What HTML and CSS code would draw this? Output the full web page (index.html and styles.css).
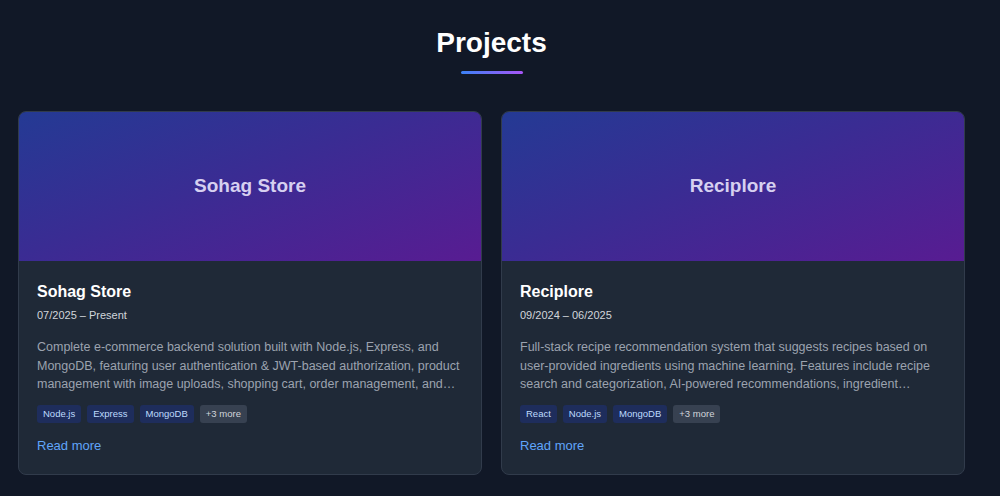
FILE: index.html
```html
<!DOCTYPE html>
<html>
<head>
<meta charset="utf-8">
<link rel="stylesheet" href="styles.css">
</head>
<body>
<section class="projects">
  <h2 class="heading">Projects</h2>
  <div class="underline"></div>
  <div class="grid">
    <article class="card">
      <div class="cover"><span>Sohag Store</span></div>
      <div class="body">
        <h3 class="title">Sohag Store</h3>
        <p class="date">07/2025 – Present</p>
        <p class="desc">Complete e-commerce backend solution built with Node.js, Express, and MongoDB, featuring user authentication &amp; JWT-based authorization, product management with image uploads, shopping cart, order management, and…</p>
        <div class="tags">
          <span class="tag">Node.js</span>
          <span class="tag">Express</span>
          <span class="tag">MongoDB</span>
          <span class="tag more">+3 more</span>
        </div>
        <a class="read" href="#">Read more</a>
      </div>
    </article>
    <article class="card">
      <div class="cover"><span>Reciplore</span></div>
      <div class="body">
        <h3 class="title">Reciplore</h3>
        <p class="date">09/2024 – 06/2025</p>
        <p class="desc">Full-stack recipe recommendation system that suggests recipes based on user-provided ingredients using machine learning. Features include recipe search and categorization, AI-powered recommendations, ingredient…</p>
        <div class="tags">
          <span class="tag">React</span>
          <span class="tag">Node.js</span>
          <span class="tag">MongoDB</span>
          <span class="tag more">+3 more</span>
        </div>
        <a class="read" href="#">Read more</a>
      </div>
    </article>
  </div>
</section>
</body>
</html>
```
FILE: styles.css
```css
html, body {
  margin: 0;
  padding: 0;
  background: #111827;
  font-family: "Liberation Sans", Arial, sans-serif;
  color: #fff;
}
.projects {
  padding: 26px 35px 0 18px;
  display: flex;
  flex-direction: column;
  align-items: center;
}
.heading {
  margin: 0;
  font-size: 28px;
  font-weight: 700;
  line-height: 34px;
  color: #fff;
}
.underline {
  width: 62px;
  height: 3px;
  margin-top: 11px;
  border-radius: 2px;
  background: linear-gradient(90deg, #3b82f6, #a855f7);
}
.grid {
  margin-top: 37px;
  width: 100%;
  display: grid;
  grid-template-columns: 1fr 1fr;
  gap: 19px;
}
.card {
  background: #1f2937;
  border: 1px solid #313b4b;
  border-radius: 8px;
  overflow: hidden;
}
.cover {
  height: 149px;
  box-sizing: border-box;
  padding-bottom: 2px;
  display: flex;
  align-items: center;
  justify-content: center;
  background: linear-gradient(160deg, #243a94 0%, #3a2c93 45%, #581c92 100%);
}
.cover span {
  font-size: 19px;
  font-weight: 700;
  color: #d6d0f0;
}
.body {
  padding: 21px 18px 20px;
}
.title {
  margin: 0;
  font-size: 16px;
  line-height: 20px;
  font-weight: 700;
  color: #fff;
}
.date {
  margin: 6px 0 0;
  font-size: 11px;
  line-height: 14px;
  color: #d1d5db;
}
.desc {
  margin: 16px 0 0;
  font-size: 12.5px;
  line-height: 18.5px;
  color: #9ca3af;
}
.tags {
  margin-top: 11px;
  display: flex;
  gap: 6px;
}
.tag {
  font-size: 9.5px;
  line-height: 18px;
  padding: 0 6px;
  border-radius: 3px;
  background: #1e2d5c;
  color: #bfdbfe;
}
.tag.more {
  background: #374151;
  color: #d1d5db;
}
.read {
  display: inline-block;
  margin-top: 15px;
  font-size: 13px;
  line-height: 16px;
  color: #60a5fa;
  text-decoration: none;
}
```
